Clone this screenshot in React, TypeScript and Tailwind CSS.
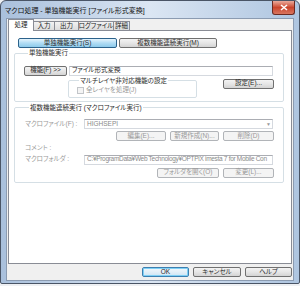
import React from "react";

const font = "font-['Liberation_Sans','Noto_Sans_CJK_JP',sans-serif] [font-feature-settings:'palt']";

function Btn({ label, w, disabled, pressed, def }: { label: string; w: string; disabled?: boolean; pressed?: boolean; def?: boolean }) {
    let look = "border-[#707070] bg-gradient-to-b from-[#f3f3f3] via-[#e6e6e6] to-[#d4d4d4] text-[#2a2a2a]";
    if (pressed) look = "border-[#2c628b] bg-gradient-to-b from-[#e5f4fc] via-[#b1dcf4] to-[#8dcaeb] text-[#2a2a2a]";
    if (disabled) look = "border-[#b1b4b8] bg-[#f4f4f4] text-[#9a9a9a]";
    if (def) look = "border-[#3c7fb1] bg-gradient-to-b from-[#f0f7fc] via-[#e2eff8] to-[#cde5f5] text-[#2a2a2a] shadow-[inset_0_0_0_1px_#7fd0f5]";
    return (
        <div className={`${w} h-[10px] shrink-0 rounded-[2px] border flex items-center justify-center whitespace-nowrap ${look}`}>
            {label}
        </div>
    );
}

function TextBox({ value, w, disabled, arrow, tight }: { value: string; w: string; disabled?: boolean; arrow?: boolean; tight?: boolean }) {
    return (
        <div className={`${w} h-[10px] shrink-0 border border-[#d5d9df] border-t-[#abadb3] bg-white flex items-center justify-between pl-[2px] pr-[1px] overflow-hidden whitespace-nowrap ${disabled ? "text-[#8a8a8a]" : "text-[#222]"}`}>
            <span className={tight ? "tracking-[-0.3px]" : ""}>{value}</span>
            {arrow && <span className="text-[5px] text-[#9a9a9a]">▼</span>}
        </div>
    );
}

function Tab({ label, w, active }: { label: string; w: string; active?: boolean }) {
    if (active) {
        return (
            <div className={`${w} h-[12px] -mr-[1px] relative z-10 border border-b-0 border-[#898c95] bg-white flex items-center justify-center`}>
                {label}
            </div>
        );
    }
    return (
        <div className={`${w} h-[10px] mt-[2px] -mr-[1px] border border-[#898c95] bg-gradient-to-b from-[#f2f2f2] to-[#dcdcdc] flex items-center justify-center whitespace-nowrap`}>
            {label}
        </div>
    );
}

export default function App() {
    return (
        <div className={`w-[300px] h-[286px] bg-[#eef0f3] overflow-hidden text-[6.5px] leading-none ${font}`}>
            <div className="h-[284px] rounded-t-[6px] rounded-b-[2px] border border-[#4a5566] bg-gradient-to-r from-[#a9c0dc] via-[#dbe6f3] to-[#aec5e0] flex flex-col">
                {/* title bar */}
                <div className="h-[17px] flex items-start justify-between shrink-0">
                    <div className="pl-[4px] pt-[6px] text-[7px] text-[#111] whitespace-nowrap">マクロ処理 - 単独機能実行 [ファイル形式変換]</div>
                    <div className="mr-[4px] w-[23px] h-[14px] rounded-b-[3px] border border-t-0 border-[#6b2a22] bg-gradient-to-b from-[#e9a99b] via-[#c9442c] to-[#d9755e] flex items-center justify-center">
                        <svg width="8" height="7" viewBox="0 0 8 7">
                            <path d="M1 1 L7 6 M7 1 L1 6" stroke="#fff" strokeWidth="1.6" />
                        </svg>
                    </div>
                </div>

                {/* client */}
                <div className="mx-[5px] flex-1 mb-[2px] bg-[#f0f0f0] border border-[#8b9bb1] flex flex-col">
                    {/* tabs */}
                    <div className="flex pl-[1px] h-[12px] shrink-0 text-[#222]">
                        <Tab label="処理" w="w-[26px]" active />
                        <Tab label="入力" w="w-[22px]" />
                        <Tab label="出力" w="w-[25px]" />
                        <Tab label="ログファイル" w="w-[36px]" />
                        <Tab label="詳細" w="w-[17px]" />
                    </div>
                    <div className="-mt-[1px] mx-[1px] h-[234px] shrink-0 border border-[#898c95] bg-white flex flex-col text-[#2a2a2a]">
                        <div className="flex gap-[2px] pl-[9px] mt-[7px]">
                            <Btn label="単独機能実行(S)" w="w-[99px]" pressed />
                            <Btn label="複数機能連続実行(M)" w="w-[98px]" />
                        </div>

                        <fieldset className="ml-[5px] mt-[2px] w-[270px] border border-[#d5dfe5] rounded-[2px] px-[9px] pt-[9px] pb-[3px]">
                            <legend className="ml-[4px] px-[1px]">単独機能実行</legend>
                            <div className="flex gap-[2px] items-center">
                                <Btn label="機能(F) >>" w="w-[43px]" />
                                <TextBox value="ファイル形式変換" w="w-[204px]" />
                            </div>
                            <div className="flex justify-between mt-[2px]">
                                <fieldset className="ml-[44px] w-[129px] h-[20px] border border-[#d5dfe5] rounded-[2px] px-[8px] pt-[3px]">
                                    <legend className="ml-[2px] px-[1px]">マルチレイヤ非対応機能の設定</legend>
                                    <div className="flex items-center gap-[2px] text-[#9a9a9a]">
                                        <div className="w-[7px] h-[7px] border border-[#c2c5c9] bg-[#f4f4f4]" />
                                        <span>全レイヤを処理(J)</span>
                                    </div>
                                </fieldset>
                                <div className="mt-[1px]">
                                    <Btn label="設定(E)..." w="w-[51px]" />
                                </div>
                            </div>
                        </fieldset>

                        <fieldset className="ml-[5px] mt-[3px] w-[270px] border border-[#d5dfe5] rounded-[2px] pl-[10px] pr-[9px] pt-[8px] pb-[4px]">
                            <legend className="ml-[4px] px-[1px]">複数機能連続実行 (マクロファイル実行)</legend>
                            <div className="flex items-center">
                                <span className="w-[59px] whitespace-nowrap text-[#9a9a9a]">マクロファイル(F) :</span>
                                <TextBox value="HIGHSEPI" w="w-[189px]" disabled arrow />
                            </div>
                            <div className="flex justify-end gap-[4px] mt-[2px]">
                                <Btn label="編集(E)..." w="w-[50px]" disabled />
                                <Btn label="新規作成(N)..." w="w-[49px]" disabled />
                                <Btn label="削除(D)" w="w-[51px]" disabled />
                            </div>
                            <div className="mt-[4px] text-[#9a9a9a]">コメント :</div>
                            <div className="flex items-center mt-[3px]">
                                <span className="w-[59px] whitespace-nowrap text-[#9a9a9a]">マクロフォルダ :</span>
                                <TextBox value="C:¥ProgramData¥Web Technology¥OPTPiX imesta 7 for Mobile Con" w="w-[189px]" disabled tight />
                            </div>
                            <div className="flex justify-end gap-[4px] mt-[3px]">
                                <Btn label="フォルダを開く(O)" w="w-[62px]" disabled />
                                <Btn label="変更(L)..." w="w-[51px]" disabled />
                            </div>
                        </fieldset>
                    </div>

                    {/* dialog buttons */}
                    <div className="flex-1 flex items-center justify-end gap-[4px] pr-[1px] text-[#2a2a2a]">
                        <Btn label="OK" w="w-[47px]" def />
                        <Btn label="キャンセル" w="w-[48px]" />
                        <Btn label="ヘルプ" w="w-[47px]" />
                    </div>
                </div>
            </div>
        </div>
    );
}
